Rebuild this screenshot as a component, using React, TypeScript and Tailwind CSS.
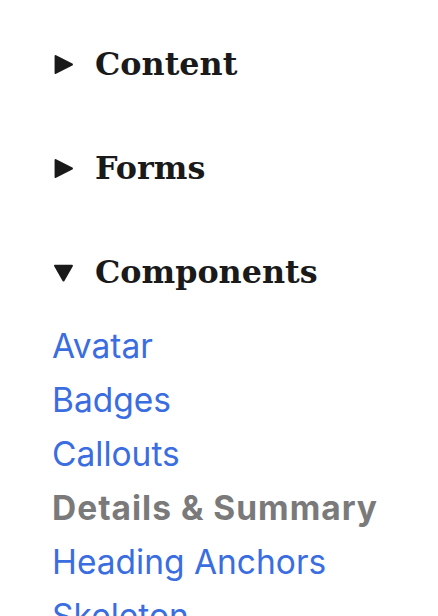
import React from 'react';

const links = [
  { label: 'Avatar' },
  { label: 'Badges' },
  { label: 'Callouts' },
  { label: 'Details & Summary', current: true },
  { label: 'Heading Anchors' },
  { label: 'Skeleton' },
];

function Caret({ open }: { open?: boolean }) {
  return (
    <svg width="21" height="21" viewBox="0 0 20 20" className="shrink-0">
      {open ? (
        <path d="M2 3.5 L18 3.5 L10 17.5 Z" fill="#1a1a1a" strokeLinejoin="round" stroke="#1a1a1a" strokeWidth={2} />
      ) : (
        <path d="M2.5 2 L18 10 L2.5 18 Z" fill="#1a1a1a" strokeLinejoin="round" stroke="#1a1a1a" strokeWidth={2} />
      )}
    </svg>
  );
}

function Section({ title, open }: { title: string; open?: boolean }) {
  return (
    <div className="flex h-[56px] items-center gap-[21px] pl-[1px]">
      <Caret open={open} />
      <span className="font-['DejaVu_Serif',serif] text-[31.8px] font-bold text-[#1a1a1a]">{title}</span>
    </div>
  );
}

export default function App() {
  return (
    <div className="h-[616px] w-[438px] overflow-hidden bg-white pl-[52px] pt-[36px]">
      <div className="flex flex-col gap-[48px]">
        <Section title="Content" />
        <Section title="Forms" />
        <Section title="Components" open />
      </div>
      <ul className="mt-[19px] flex flex-col font-['Inter',sans-serif] text-[33.5px]">
        {links.map((l) => (
          <li key={l.label} className="flex h-[54px] items-center">
            <a
              href="#"
              className={l.current ? 'font-bold tracking-[1px] text-[#7a7a7a]' : 'text-[#3a6ddf]'}
            >
              {l.label}
            </a>
          </li>
        ))}
      </ul>
    </div>
  );
}
